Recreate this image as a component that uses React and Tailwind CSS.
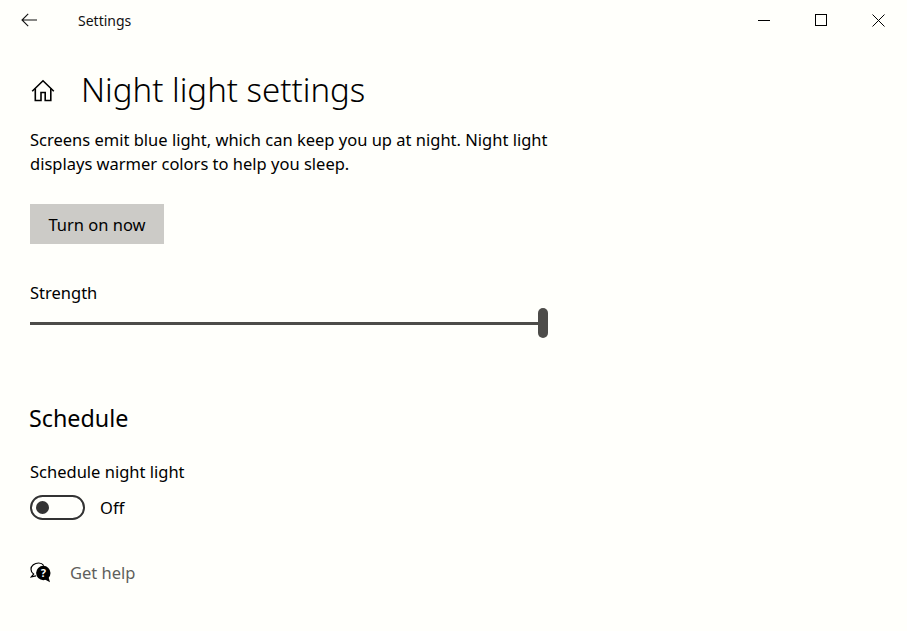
const FONT = "font-['Noto_Sans','Open_Sans',sans-serif]";

function BackIcon() {
  return (
    <svg width="16" height="14" viewBox="0 0 16 14" fill="none" stroke="#111" strokeWidth="1.100">
      <path d="M16 7H1M7.200 .8 1 7l6.200 6.200" />
    </svg>
  );
}

function HomeIcon() {
  return (
    <svg width="24" height="23" viewBox="0 0 24 23" fill="none" stroke="#000" strokeWidth="1.600">
      <path d="M1.200 12.300 12 1.800l10.800 10.500" />
      <path d="M4.300 9.500V21.500h5.700v-8h4.200v8h5.600V9.500" />
    </svg>
  );
}

function HelpIcon() {
  return (
    <svg width="22" height="22" viewBox="0 0 22 22">
      <path
        d="M13.800 3.600C12.600 1.900 10.800 1 8.700 1 4.600 1 1 3.800 1 7.300c0 2 1 3.700 2.600 4.800L1.300 14.800l4.700-1"
        fill="none"
        stroke="#000"
        strokeWidth="1.200"
      />
      <circle cx="13.300" cy="11" r="7.200" fill="#000" />
      <path d="M14 17l6 3.200-1.700-5.700z" fill="#000" />
      <text x="13.300" y="15" textAnchor="middle" fontSize="11" fontWeight="700" fill="#fff" fontFamily="Noto Sans, sans-serif">
        ?
      </text>
    </svg>
  );
}

export default function App() {
  return (
    <div className={`min-h-screen bg-[#fffffb] text-black ${FONT}`}>
      {/* Title bar */}
      <header className="h-10 flex items-center">
        <button className="w-[58px] flex justify-center">
          <BackIcon />
        </button>
        <div className="ml-[20px] text-[14px] text-[#111]">Settings</div>
        <div className="ml-auto flex items-center">
          <div className="w-[57px] flex justify-center">
            <div className="w-3 h-px bg-black" />
          </div>
          <div className="w-[57px] flex justify-center">
            <div className="w-3 h-3 border border-black" />
          </div>
          <div className="w-[58px] flex justify-center">
            <svg width="13" height="13" viewBox="0 0 13 13" stroke="#000" strokeWidth="1">
              <path d="M.5.5l12 12M12.500.5l-12 12" />
            </svg>
          </div>
        </div>
      </header>

      <main className="pl-[30px]">
        <div className="flex items-center mt-[27px] h-[46px]">
          <div className="ml-px">
            <HomeIcon />
          </div>
          <h1 className="ml-[26px] text-[33px] leading-[46px] font-light">Night light settings</h1>
        </div>

        <p className="mt-[15px] w-[525px] text-[16.5px] leading-6">
          Screens emit blue light, which can keep you up at night. Night light displays warmer colors to help you sleep.
        </p>

        <button className="mt-[28px] block w-[134px] h-10 pt-0.5 bg-[#cccbc7] text-[16.5px]">Turn on now</button>

        <div className="mt-[37px] text-[16.5px] leading-6">Strength</div>
        <div className="mt-[6px] w-[518px] h-6 flex items-center">
          <div className="flex-1 h-[3px] bg-[#4d4c49]" />
          <div className="w-[10px] h-[30px] rounded-full bg-[#4d4c49] shrink-0" />
        </div>

        <h2 className="mt-[67px] -ml-px text-[23.3px] leading-8">Schedule</h2>

        <div className="mt-[26px] text-[16.5px] leading-6">Schedule night light</div>
        <div className="mt-[11px] flex items-center">
          <div className="w-[55px] h-[25px] rounded-full border-[2.5px] border-[#333] flex items-center pl-[4px]">
            <div className="w-[13px] h-[13px] rounded-full bg-[#333]" />
          </div>
          <span className="ml-[15px] text-[16.5px] leading-6">Off</span>
        </div>

        <div className="mt-[41px] flex items-center">
          <HelpIcon />
          <span className="ml-[18px] text-[16.5px] leading-6 text-[#5f5f5c]">Get help</span>
        </div>
      </main>
    </div>
  );
}
